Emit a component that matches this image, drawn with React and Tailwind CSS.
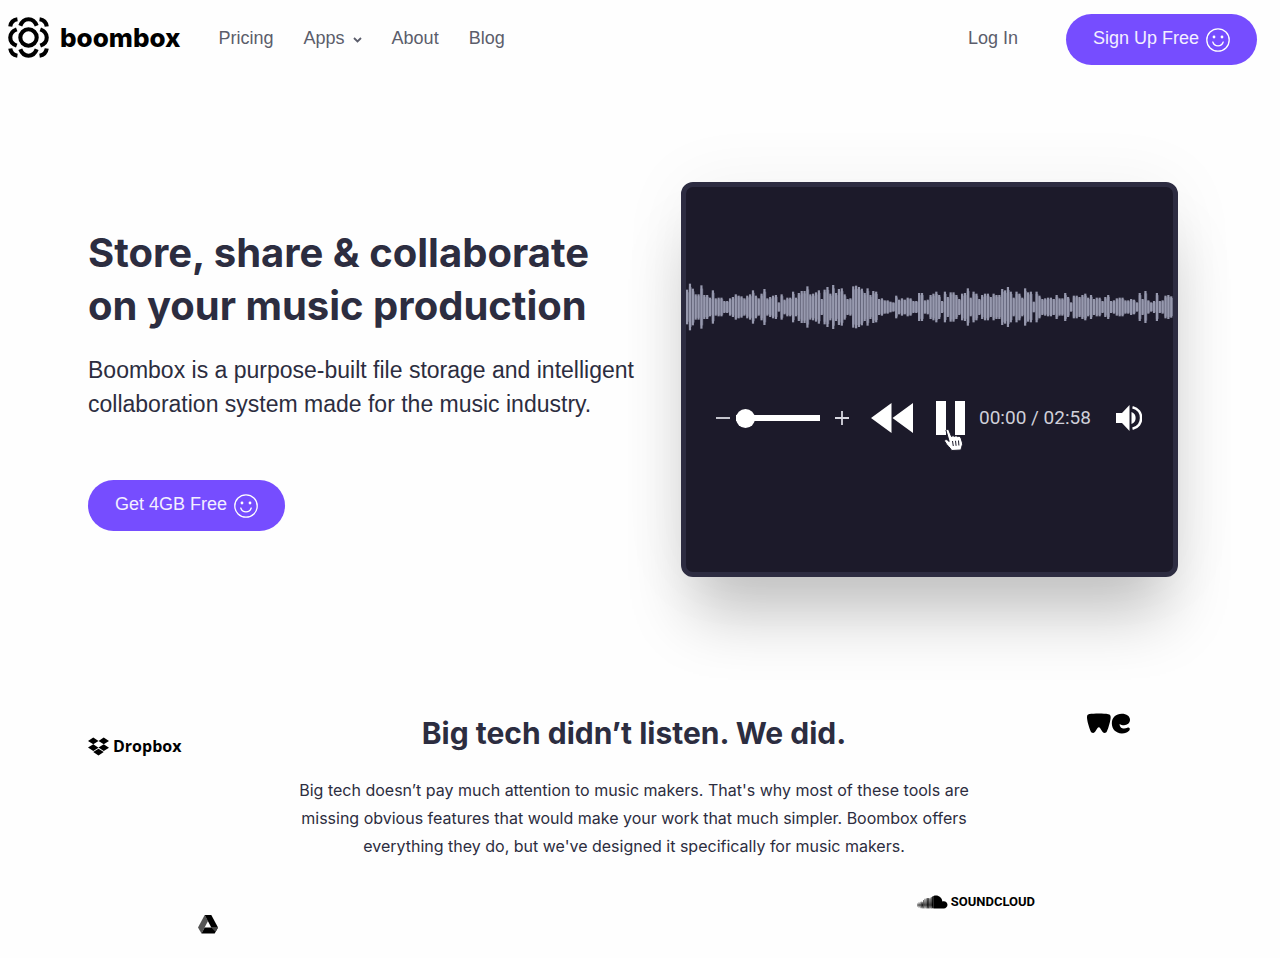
// App.jsx
import { FaDropbox, FaSoundcloud } from "react-icons/fa";
import { SiWetransfer } from "react-icons/si";

const NAV_LINKS = [
  { label: "Pricing", href: "#pricing" },
  { label: "Apps", href: "#apps", menu: true },
  { label: "About", href: "#about" },
  { label: "Blog", href: "#blog" },
];

/** Half height of each bar, in thirds of a pixel */
const WAVE = [
  52, 70, 55, 38, 38, 65, 36, 36, 28, 50, 26, 28, 28, 18, 18, 26, 30, 38, 34, 32,
  26, 34, 38, 50, 34, 26, 40, 54, 26, 30, 34, 36, 14, 38, 22, 28, 28, 46, 28, 42,
  48, 48, 62, 38, 40, 44, 50, 24, 52, 60, 40, 66, 42, 54, 56, 38, 24, 26, 62, 64,
  60, 55, 42, 56, 36, 48, 46, 24, 26, 20, 20, 16, 14, 34, 22, 26, 22, 28, 26, 18,
  18, 42, 42, 20, 22, 36, 40, 46, 36, 18, 46, 30, 44, 44, 36, 24, 40, 42, 56, 28,
  46, 40, 24, 36, 40, 40, 30, 40, 36, 36, 54, 50, 60, 46, 28, 46, 40, 28, 56, 44,
  46, 16, 46, 34, 24, 26, 28, 28, 24, 36, 26, 26, 42, 30, 14, 34, 34, 30, 36, 40,
  28, 36, 24, 28, 28, 18, 30, 36, 18, 20, 26, 28, 28, 20, 20, 24, 22, 14, 42, 24,
  48, 20, 14, 18, 42, 18, 20, 34, 36, 32,
];

function LogoMark() {
  return (
    <svg viewBox="0 0 40 40" className="size-[41px]" fill="none" stroke="black" strokeWidth="4" aria-hidden="true">
      <circle cx="20" cy="20" r="8" />
      <path d="M12 8.5C13.5 4.5 16.5 2.2 20 2.2S26.5 4.5 28 8.5" />
      <path d="M12 31.5C13.5 35.5 16.5 37.8 20 37.8S26.5 35.5 28 31.5" />
      <path d="M8.5 12C4.5 13.5 2.2 16.5 2.2 20S4.5 26.5 8.5 28" />
      <path d="M31.5 12C35.5 13.5 37.8 16.5 37.8 20S35.5 26.5 31.5 28" />
      <path d="M2.2 9.2C2.8 5 5 2.8 9.2 2.2" />
      <path d="M30.8 2.2C35 2.8 37.2 5 37.8 9.2" />
      <path d="M2.2 30.8C2.8 35 5 37.2 9.2 37.8" />
      <path d="M30.8 37.8C35 37.2 37.2 35 37.8 30.8" />
    </svg>
  );
}

function Smiley() {
  return (
    <svg viewBox="0 0 24 24" className="size-6" fill="none" stroke="white" strokeWidth="1.3" aria-hidden="true">
      <circle cx="12" cy="12" r="11.2" />
      <circle cx="8" cy="9" r="1.4" fill="white" stroke="none" />
      <circle cx="16" cy="9" r="1.4" fill="white" stroke="none" />
      <path d="M6.8 14C8.5 19.2 15.5 19.2 17.2 14" strokeLinecap="round" />
    </svg>
  );
}

function PillButton({ children }) {
  return (
    <button
      type="button"
      className="inline-flex h-[51px] items-center gap-[7px] rounded-full bg-[#764dff] px-[27px] text-lg whitespace-nowrap text-[#f3efff]"
    >
      <span className="pb-[3px]">{children}</span>
      <Smiley />
    </button>
  );
}

function Waveform() {
  return (
    <svg viewBox="0 0 510 150" className="block h-full w-full" preserveAspectRatio="none" fill="#9799ae" aria-hidden="true">
      {WAVE.map((h, i) => (
        <g key={i}>
          <rect x={i * 3} y={75 - h * 0.85} width="3" height={h * 1.7} fill="#5f6076" />
          <rect x={i * 3} y={75 - h} width="2.3" height={h * 2} />
        </g>
      ))}
    </svg>
  );
}

function Player() {
  return (
    <div className="flex aspect-[497/395] flex-col rounded-xl border-[5px] border-[#2d2c41] bg-[#1c1a2a] pt-[95px] shadow-[0_0_70px_rgba(0,0,0,0.05),0_50px_60px_-12px_rgba(0,0,0,0.22)]">
      <div className="h-[50px]">
        <Waveform />
      </div>

      <div className="mt-[69px] flex items-center pr-[31px] pl-[30px] text-white">
        <svg viewBox="0 0 14 14" className="size-[14px]" stroke="#d8d8e0" strokeWidth="1.8" aria-hidden="true">
          <path d="M0 7H14" />
        </svg>
        <input
          type="range"
          aria-label="Volume"
          min="0"
          max="100"
          defaultValue="0"
          className="ml-[6px] h-[6px] w-[84px] appearance-none bg-white [&::-webkit-slider-thumb]:size-[19px] [&::-webkit-slider-thumb]:appearance-none [&::-webkit-slider-thumb]:rounded-full [&::-webkit-slider-thumb]:bg-white"
        />
        <svg viewBox="0 0 14 14" className="ml-[15px] size-[14px]" stroke="#d8d8e0" strokeWidth="1.8" aria-hidden="true">
          <path d="M0 7H14M7 0V14" />
        </svg>
        <button type="button" aria-label="Rewind" className="ml-[22px]">
          <svg viewBox="0 0 42 30" className="h-[30px] w-[42px]" fill="white">
            <path d="M0 15L20.5 0V30ZM21.5 15L42 0V30Z" />
          </svg>
        </button>
        <button type="button" aria-label="Pause" className="relative ml-[23px]">
          <svg viewBox="0 0 29 34" className="h-[34px] w-[29px]" fill="white">
            <path d="M0 0H10V34H0ZM19 0H29V34H19Z" />
          </svg>
          {/* hand cursor */}
          <svg viewBox="0 0 20 22" className="absolute top-7 left-2 h-[22px] w-5" fill="white" stroke="#1c1a2a" strokeWidth="1" aria-hidden="true">
            <path d="M2 1.500C2.500 0 4.300 0 5 1.500L7.500 7.500C8.500 6.500 10 6.800 10.500 7.500C11.500 6.500 13 6.700 13.600 7.700C15 7 16.300 7.500 17 9L18.500 14C18.800 16 17.500 17.500 17 21L7.500 21.500C7 19 3 17 .8 12.500C.1 11 1.800 9.800 3.300 11L5.200 12.500Z" />
            <path d="M8.500 12L9.300 17M11.500 11.800L12.100 16.800M14.500 11.500L14.900 16.500" />
          </svg>
        </button>
        <span className="ml-[14px] font-[Roboto,sans-serif] text-[19px] whitespace-nowrap text-[#cfcfd9]">00:00 / 02:58</span>
        <button type="button" aria-label="Mute" className="ml-auto">
          <svg viewBox="0 0 26 26" className="size-[26px]" fill="white">
            <path d="M0 8H6L13.5 0V26L6 18H0Z" />
            <path d="M15.5 7C21 8.5 21 17.5 15.5 19Z" />
            <path d="M16.5 2.2C28 5 28 21 16.5 23.8" fill="none" stroke="white" strokeWidth="2.6" />
          </svg>
        </button>
      </div>
    </div>
  );
}

function DriveLogo() {
  return (
    <svg viewBox="0 0 20 19" className="h-[19px] w-5" role="img" aria-label="Google Drive">
      <path d="M6.7 0L10 6L3.5 18.5L0 12.5Z" fill="#555" />
      <path d="M6.7 0H13.3L20 12.5H13.3Z" fill="black" />
      <path d="M6.7 12.5H20L16.7 18.5H3.5Z" fill="black" />
      <path d="M13.3 12.5H20L17.5 17Z" fill="#444" />
    </svg>
  );
}

export default function App() {
  return (
    <div className="bg-[#fefefe] font-['Liberation_Sans',sans-serif] text-[#2c2d40]">
      <header className="flex items-center pt-[14px] pr-[23px] pl-2 text-lg text-[#5b5d6b]">
        <a href="#home" className="flex items-center gap-[11px] pb-1 text-black">
          <LogoMark />
          <span className="font-[Inter,sans-serif] text-[26px] leading-8 font-extrabold">boombox</span>
        </a>
        <nav className="ml-[38px] flex items-center gap-[30px] pb-[3px]">
          {NAV_LINKS.map((link) => (
            <a key={link.label} href={link.href} className="flex items-center gap-2">
              {link.label}
              {link.menu && (
                <svg viewBox="0 0 8 6" className="mt-1 h-[6px] w-[9px]" fill="none" stroke="currentColor" strokeWidth="1.8" aria-hidden="true">
                  <path d="M.5 1L4 4.500L7.500 1" />
                </svg>
              )}
            </a>
          ))}
        </nav>
        <div className="ml-auto flex items-center gap-12">
          <a href="#login" className="pb-[3px]">Log In</a>
          <PillButton>Sign Up Free</PillButton>
        </div>
      </header>

      <main>
        <section className="grid grid-cols-[593fr_497fr] items-center pt-[117px] pr-[102px] pl-[88px]">
          <div className="pb-[2px]">
            <h1 className="font-[Inter,sans-serif] text-[40px] leading-[53px] font-bold">
              Store, share &amp; collaborate
              <br />
              on your music production
            </h1>
            <p className="mt-[21px] text-[23px] leading-[34px]">
              Boombox is a purpose-built file storage and intelligent
              <br />
              collaboration system made for the music industry.
            </p>
            <div className="mt-[59px]">
              <PillButton>Get 4GB Free</PillButton>
            </div>
          </div>
          <Player />
        </section>

        <section className="pt-[125px] pb-6">
          <div className="flex items-start justify-between pr-[150px] pl-[88px] text-black">
            <div className="mt-8 flex w-[93px] items-center gap-1">
              <FaDropbox className="size-[21px] shrink-0" aria-hidden="true" />
              <span className="font-['Open_Sans',sans-serif] text-base leading-6 font-bold">Dropbox</span>
            </div>
            <div className="mt-[9px] text-center text-[#2c2d40]">
              <h2 className="font-[Inter,sans-serif] text-[30px] leading-11 font-bold">Big tech didn’t listen. We did.</h2>
              <p className="mt-[21px] font-[Inter,sans-serif] text-base leading-7 whitespace-nowrap">
                Big tech doesn’t pay much attention to music makers. That's why most of these tools are
                <br />
                missing obvious features that would make your work that much simpler. Boombox offers
                <br />
                everything they do, but we've designed it specifically for music makers.
              </p>
            </div>
            <SiWetransfer className="size-[43px]" role="img" aria-label="WeTransfer" />
          </div>

          <div className="mt-[30px] flex items-start justify-between pr-[245px] pl-[198px] text-black">
            <div className="mt-[25px]">
              <DriveLogo />
            </div>
            <div className="flex items-center gap-[3px]">
              <FaSoundcloud className="h-6 w-[31px]" aria-hidden="true" />
              <span className="font-[Roboto,sans-serif] text-[13px] leading-4 font-bold">SOUNDCLOUD</span>
            </div>
          </div>
        </section>
      </main>
    </div>
  );
}
